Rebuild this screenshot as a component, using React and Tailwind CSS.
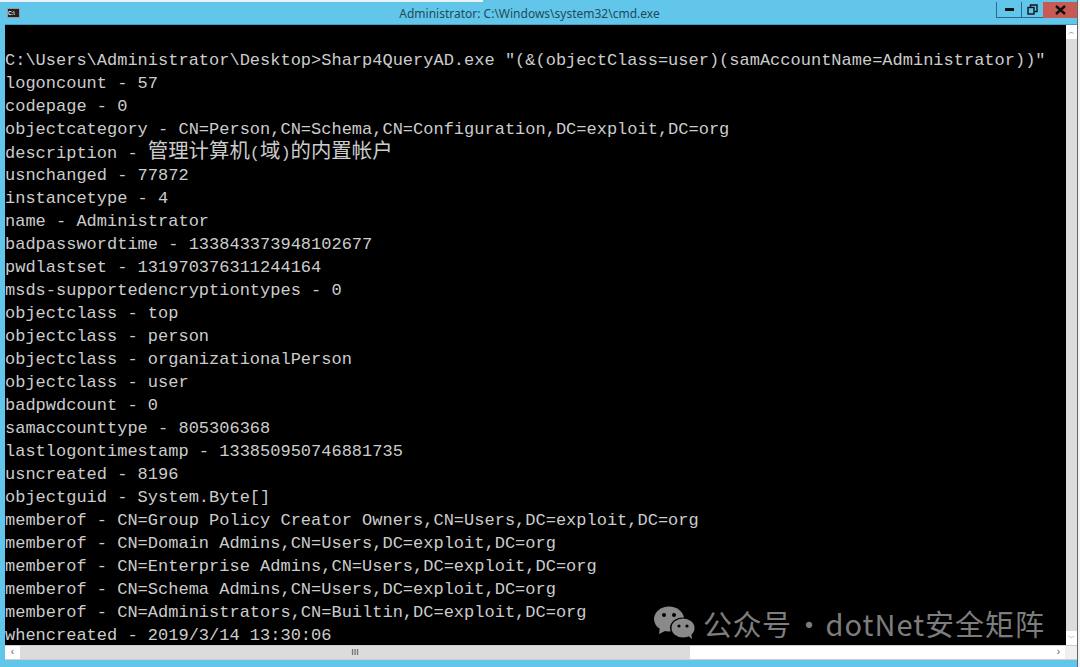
const lines = [
  'C:\\Users\\Administrator\\Desktop>Sharp4QueryAD.exe "(&(objectClass=user)(samAccountName=Administrator))"',
  'logoncount - 57',
  'codepage - 0',
  'objectcategory - CN=Person,CN=Schema,CN=Configuration,DC=exploit,DC=org',
  <>description - <span className="text-[20.4px]">管理计算机</span>(<span className="text-[20.4px]">域</span>)<span className="text-[20.4px]">的内置帐户</span></>,
  'usnchanged - 77872',
  'instancetype - 4',
  'name - Administrator',
  'badpasswordtime - 133843373948102677',
  'pwdlastset - 131970376311244164',
  'msds-supportedencryptiontypes - 0',
  'objectclass - top',
  'objectclass - person',
  'objectclass - organizationalPerson',
  'objectclass - user',
  'badpwdcount - 0',
  'samaccounttype - 805306368',
  'lastlogontimestamp - 133850950746881735',
  'usncreated - 8196',
  'objectguid - System.Byte[]',
  'memberof - CN=Group Policy Creator Owners,CN=Users,DC=exploit,DC=org',
  'memberof - CN=Domain Admins,CN=Users,DC=exploit,DC=org',
  'memberof - CN=Enterprise Admins,CN=Users,DC=exploit,DC=org',
  'memberof - CN=Schema Admins,CN=Users,DC=exploit,DC=org',
  'memberof - CN=Administrators,CN=Builtin,DC=exploit,DC=org',
  'whencreated - 2019/3/14 13:30:06',
];

const WeChatMark = () => (
  <svg width="42" height="34" viewBox="0 0 42 34" fill="#8a8a8a">
    <ellipse cx="15" cy="13" rx="15" ry="12.5" />
    <path d="M6 21l-1 7 8-4z" />
    <ellipse cx="29" cy="22" rx="13" ry="10.5" fill="#000" />
    <ellipse cx="29" cy="22" rx="11.5" ry="9.5" />
    <path d="M33 29l5 4-1-7z" />
    <circle cx="10" cy="9" r="2" fill="#000" />
    <circle cx="20" cy="9" r="2" fill="#000" />
    <circle cx="25" cy="20" r="1.6" fill="#000" />
    <circle cx="33" cy="20" r="1.6" fill="#000" />
  </svg>
);

export default function App() {
  return (
    <div className="w-[1080px] h-[667px] overflow-hidden flex bg-[#f4f4f4] relative font-['Liberation_Sans',sans-serif]">
      <div className="absolute left-0 top-0 w-[483px] h-[2px] bg-[#e8f4f9]" />
      <div className="flex-1 min-w-0 bg-[#62c6ea] flex flex-col pl-[5px] pt-[2px]">
        {/* title bar */}
        <div className="h-[23px] shrink-0 flex items-start relative border-b border-[#3f9fc4]">
          <div className="absolute left-[2px] top-[6px] w-[13px] h-[10px] bg-[#222] border border-[#999] text-white text-[5px] leading-[8px] font-bold">
            C:\
          </div>
          <div className="flex-1 text-center text-[12px] text-[#1f4a5c] pt-[3px] pl-[58px] font-['Noto_Sans',sans-serif]">
            Administrator: C:\Windows\system32\cmd.exe
          </div>
          <div className="flex h-[16px]">
            <div className="w-[25px] border-l border-b border-[#2a6a88] flex items-center justify-center">
              <div className="w-[9px] h-[3px] bg-[#111]" />
            </div>
            <div className="w-[22px] border-l border-b border-[#2a6a88] flex items-center justify-center">
              <svg width="11" height="11" viewBox="0 0 11 11" fill="none" stroke="#111" strokeWidth="1.4">
                <rect x="1" y="3.5" width="6" height="6.5" />
                <path d="M3.5 3V1h6.5v6.5H7.5" />
              </svg>
            </div>
            <div className="w-[34px] bg-[#c75a52] flex items-center justify-center">
              <svg width="11" height="10" viewBox="0 0 11 10" fill="none" stroke="#111" strokeWidth="2.4">
                <path d="M1 1l9 8M10 1l-9 8" />
              </svg>
            </div>
          </div>
        </div>

        {/* console + vertical scrollbar */}
        <div className="flex-1 min-h-0 flex">
          <div className="flex-1 bg-black relative pt-[24px] overflow-hidden">
            {lines.map((line, i) => (
              <div
                key={i}
                className="h-[23px] leading-[23px] text-[17px] whitespace-pre text-[#cccccc] font-['Liberation_Mono','Noto_Sans_CJK_SC',monospace]"
              >
                {line}
              </div>
            ))}
            <div className="absolute left-[649px] top-[581px] flex items-center gap-[7px] text-[#7d7d7d] font-['Noto_Sans_CJK_SC',sans-serif] text-[29px] leading-[34px]">
              <WeChatMark />
              <span className="tracking-[0.5px]">公众号</span>
              <span className="w-[20px] -ml-[4px] mr-[4px]">·</span>
              <span className="tracking-[1px]">dotNet安全矩阵</span>
            </div>
          </div>
          <div className="w-[11px] shrink-0 bg-[#dcdcdc] flex flex-col">
            <div className="h-[14px] bg-white text-center text-[7px] leading-[14px] text-[#555]">︿</div>
            <div className="flex-1" />
            <div className="h-[14px] bg-white text-center text-[7px] leading-[14px] text-[#555]">﹀</div>
          </div>
        </div>

        {/* horizontal scrollbar */}
        <div className="h-[15px] shrink-0 flex bg-[#f0f0f0] border-y border-[#cfcfcf]">
          <div className="w-[15px] bg-white text-center text-[10px] leading-[12px] text-[#555]">‹</div>
          <div className="w-[670px] bg-[#dcdcdc] text-center text-[9px] leading-[12px] text-[#444]">III</div>
          <div className="flex-1 bg-white" />
          <div className="w-[13px] bg-white text-center text-[10px] leading-[12px] text-[#555]">›</div>
          <div className="w-[12px] bg-[#f0f0f0]" />
        </div>
        <div className="h-[7px] shrink-0" />
      </div>
      <div className="w-[3px] shrink-0 border-l border-[#666]" />
    </div>
  );
}
